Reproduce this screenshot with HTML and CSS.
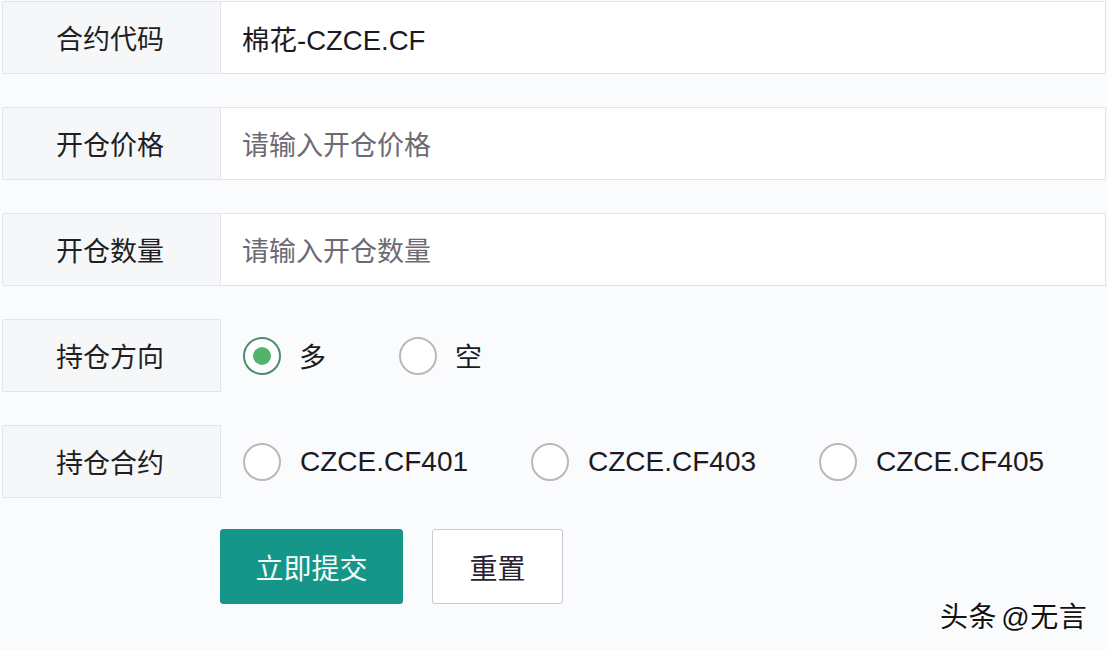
FILE: index.html
```html
<!DOCTYPE html>
<html lang="zh-CN">
<head>
<meta charset="utf-8">
<title>开仓表单</title>
<link rel="stylesheet" href="styles.css">
</head>
<body>
<form class="form">
  <div class="row">
    <div class="label">合约代码</div>
    <div class="field"><span class="value">棉花-CZCE.CF</span></div>
  </div>
  <div class="row">
    <div class="label">开仓价格</div>
    <div class="field"><span class="placeholder">请输入开仓价格</span></div>
  </div>
  <div class="row">
    <div class="label">开仓数量</div>
    <div class="field"><span class="placeholder">请输入开仓数量</span></div>
  </div>
  <div class="row">
    <div class="label">持仓方向</div>
    <div class="options">
      <span class="option opt-dir"><span class="radio checked"></span><span class="opt-text">多</span></span>
      <span class="option opt-dir"><span class="radio"></span><span class="opt-text">空</span></span>
    </div>
  </div>
  <div class="row">
    <div class="label">持仓合约</div>
    <div class="options">
      <span class="option opt-contract"><span class="radio"></span><span class="opt-text latin">CZCE.CF401</span></span>
      <span class="option opt-contract"><span class="radio"></span><span class="opt-text latin">CZCE.CF403</span></span>
      <span class="option opt-contract"><span class="radio"></span><span class="opt-text latin">CZCE.CF405</span></span>
    </div>
  </div>
  <div class="actions">
    <button type="button" class="btn btn-primary">立即提交</button>
    <button type="button" class="btn btn-default">重置</button>
  </div>
</form>
<div class="watermark">头条 @无言</div>
</body>
</html>
```

FILE: styles.css
```css
html, body {
  margin: 0;
  padding: 0;
  background: #fafbfd;
  font-family: "Liberation Sans", "Noto Sans CJK SC", sans-serif;
  color: #1f1f24;
}

body {
  width: 1108px;
  height: 650px;
  overflow: hidden;
  position: relative;
}

.form {
  display: flex;
  flex-direction: column;
  gap: 33px;
  padding: 1px 0 0 2px;
}

.row {
  display: flex;
  height: 73px;
}

.label {
  width: 219px;
  flex: none;
  box-sizing: border-box;
  display: flex;
  align-items: center;
  justify-content: center;
  padding-right: 3px;
  background: #f6f7f9;
  border: 1px solid #e2e4e8;
  border-radius: 2px 0 0 2px;
  font-size: 27px;
  color: #1f1f24;
}

.field {
  flex: 1;
  margin-right: 2px;
  box-sizing: border-box;
  display: flex;
  align-items: center;
  padding-left: 21px;
  background: #fff;
  border: 1px solid #e2e4e8;
  border-left: none;
  font-size: 27.5px;
}

.value {
  color: #1c1a20;
}

.placeholder {
  color: #6e6a74;
  font-size: 27px;
}

.options {
  display: flex;
  align-items: center;
  padding-left: 22px;
  font-size: 27px;
}

.option {
  display: flex;
  align-items: center;
}

.opt-dir {
  width: 156px;
}

.opt-contract {
  width: 288px;
}

.radio {
  width: 38px;
  height: 38px;
  box-sizing: border-box;
  border: 2px solid #b9b9bc;
  border-radius: 50%;
  background: #fff;
  display: flex;
  align-items: center;
  justify-content: center;
  margin-right: 18px;
}

.radio.checked {
  border-color: #4c8c6c;
}

.radio.checked::after {
  content: "";
  width: 18px;
  height: 18px;
  border-radius: 50%;
  background: #52b36d;
}

.opt-contract .radio {
  margin-right: 19px;
}

.opt-text {
  color: #1c1a22;
}

.opt-text.latin {
  font-size: 28px;
}

.actions {
  display: flex;
  gap: 29px;
  padding-left: 218px;
  margin-top: -2px;
}

.btn {
  height: 75px;
  box-sizing: border-box;
  border-radius: 3px;
  font-family: "Liberation Sans", "Noto Sans CJK SC", sans-serif;
  font-size: 28px;
  cursor: pointer;
}

.btn-primary {
  width: 183px;
  background: #159689;
  border: 1px solid #159689;
  color: #f4fbfa;
}

.btn-default {
  width: 131px;
  background: #fff;
  border: 1px solid #c9c9cf;
  color: #2a2232;
}

.watermark {
  position: absolute;
  left: 940px;
  top: 595px;
  font-size: 28px;
  color: #111;
  text-shadow: 1px 1px 0 #fff, -1px 0 0 #fff;
  letter-spacing: 0.5px;
  word-spacing: -4px;
}
```
